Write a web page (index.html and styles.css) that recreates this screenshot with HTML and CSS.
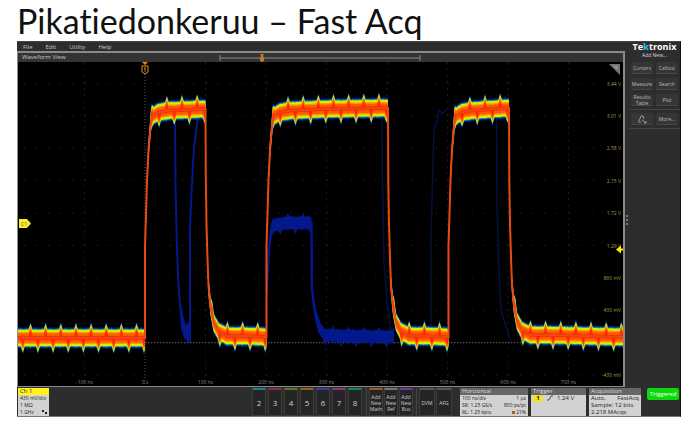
FILE: index.html
```html
<!DOCTYPE html>
<html lang="fi">
<head>
	<meta charset="utf-8">
	<title>Pikatiedonkeruu – Fast Acq</title>
	<meta name="viewport" content="width=device-width, initial-scale=1.0">
	<link rel="stylesheet" href="styles.css">
</head>
<body>
	<h1>Pikatiedonkeruu – Fast Acq</h1>
	<div class="scope">
		<div class="top">
			<div class="main">
				<nav class="menu">
					<button>File</button>
					<button>Edit</button>
					<button>Utility</button>
					<button>Help</button>
				</nav>
				<div class="view">
					<div class="view-head">
						<span>Waveform View</span>
						<svg class="overview" viewBox="0 0 202 8">
							<path d="M1 1V7M201 1V7M1 4H201" stroke="#8a8a8a" fill="none"/>
							<path d="M41 0h4l-1 2 1 2v3l-2 1-2-1V4l1-2z" fill="#c87828"/>
						</svg>
					</div>
					<svg class="plot" id="plot" viewBox="0 0 605 324"></svg>
				</div>
			</div>
			<aside class="side">
				<div class="logo">Te<b>k</b>tronix</div>
				<div class="add">Add New...</div>
				<div class="tools">
					<button>Cursors</button>
					<button>Callout</button>
					<button>Measure</button>
					<button>Search</button>
					<button>Results<br>Table</button>
					<button>Plot</button>
				</div>
				<div class="tools">
					<button aria-label="Zoom">
						<svg viewBox="0 0 12 10" width="12" height="10">
							<path d="M2 8h3M3 7l2-5h2l1 3M6 6l4 3M8 9h2V7" stroke="#999" fill="none"/>
						</svg>
					</button>
					<button>More...</button>
				</div>
				<div class="grip"><i></i><i></i><i></i></div>
			</aside>
		</div>
		<div class="bar">
			<div class="badge ch1">
				<h2>Ch 1</h2>
				<p>430 mV/div</p>
				<p>1 MΩ</p>
				<p><span>1 GHz</span><svg viewBox="0 0 5 5" width="5" height="5"><path d="M0 1h2v2h3v2H3V3H0z" fill="#222"/></svg></p>
			</div>
			<div class="channels">
				<button class="c2">2</button>
				<button class="c3">3</button>
				<button class="c4">4</button>
				<button class="c5">5</button>
				<button class="c6">6</button>
				<button class="c7">7</button>
				<button class="c8">8</button>
			</div>
			<div class="channels small">
				<button class="c5">Add<br>New<br>Math</button>
				<button class="cr">Add<br>New<br>Ref</button>
				<button class="cb">Add<br>New<br>Bus</button>
			</div>
			<div class="channels small wide">
				<button>DVM</button>
				<button>AFG</button>
			</div>
			<div class="badge horizontal">
				<h2>Horizontal</h2>
				<p><span>100 ns/div</span><span>1 µs</span></p>
				<p><span>SR: 1.25 GS/s</span><span>800 ps/pt</span></p>
				<p><span>RL: 1.25 kpts</span><span><i class="pos"></i> 21%</span></p>
			</div>
			<div class="badge trigger">
				<h2>Trigger</h2>
				<p><b>1</b><svg viewBox="0 0 6 6" width="6" height="6"><path d="M0 5h2l2-4h2" stroke="#456" fill="none"/></svg><span>1.24 V</span></p>
			</div>
			<div class="badge acquisition">
				<h2>Acquisition</h2>
				<p><span>Auto,</span><span>FastAcq</span></p>
				<p>Sample: 12 bits</p>
				<p>2.218 MAcqs</p>
			</div>
			<button class="triggered">Triggered</button>
		</div>
	</div>
	<script src="plot.js"></script>
</body>
</html>
```

FILE: styles.css
```css
body {
	margin: 0;
	padding: 0 19px 0 17px;
	background: #fff;
	font-family: "Open Sans", "Liberation Sans", sans-serif;
}

h1 {
	margin: 0;
	height: 41px;
	font: 34px/41px Lato, sans-serif;
	font-variant-ligatures: none;
	color: #111;
	white-space: nowrap;
}

button {
	margin: 0;
	padding: 0;
	border: none;
	background: none;
	color: #bbb;
	font: 6px/6px "Open Sans", sans-serif;
	white-space: nowrap;
}

.scope {
	background: #2d2d2d;
	border-top: 1px solid #444;
	border-bottom: 1px solid #777;
	border-right: 1px solid #111;
	box-sizing: border-box;
}

.top {
	display: grid;
	grid-template-columns: 1fr 55px;
}

.menu {
	display: flex;
	gap: 13px;
	height: 9px;
	padding-left: 6px;
}

.menu button {
	color: #ccc;
}

.view {
	border: 1px solid #8a8a8a;
	border-top-width: 2px;
	border-right-width: 2px;
}

.view-head {
	display: flex;
	align-items: center;
	height: 9px;
	background: #333;
	color: #ccc;
	font-size: 6px;
	line-height: 9px;
}

.view-head span {
	width: 197px;
	padding-left: 4px;
}

.overview {
	width: 202px;
	height: 8px;
}

.plot {
	display: block;
	width: 100%;
	background: #000;
	font: 5px "Open Sans", sans-serif;
}

.side {
	display: flex;
	flex-direction: column;
	padding-left: 4px;
}

.logo {
	color: #fff;
	font: bold 9px/9px "Open Sans", sans-serif;
	text-align: center;
}

.logo b {
	color: #2bb6d6;
}

.add {
	padding-top: 1px;
	color: #ddd;
	font-size: 5px;
	line-height: 7px;
	text-align: center;
}

.tools {
	display: grid;
	grid-template-columns: 1fr 1fr;
	gap: 4px 3px;
	padding: 3px 2px;
	border-bottom: 1px solid #444;
}

.tools button {
	display: grid;
	place-items: center;
	height: 12px;
	background: #363636;
	border-bottom: 1px solid #484848;
	border-radius: 2px;
	font-size: 5px;
	line-height: 6px;
	text-align: center;
}

.grip {
	display: flex;
	flex-direction: column;
	gap: 2px;
	margin: 86px 0 0 -3px;
}

.grip i {
	width: 2px;
	height: 2px;
	background: #777;
}

.bar {
	display: flex;
	gap: 3px;
	height: 28px;
	padding: 1px 1px 0 1px;
}

.badge {
	background: #d2d2d2;
	color: #222;
	font-size: 6px;
	line-height: 7px;
	overflow: hidden;
	white-space: nowrap;
}

.badge h2 {
	margin: 0;
	padding-left: 2px;
	background: #666;
	color: #ddd;
	font: 6px/7px "Open Sans", sans-serif;
}

.badge p {
	display: flex;
	justify-content: space-between;
	margin: 0;
	padding: 0 2px;
}

.ch1 {
	width: 31px;
	margin-right: auto;
}

.ch1 h2 {
	background: #fff01e;
	color: #332;
}

.ch1 p {
	font-size: 5px;
}

.channels {
	display: flex;
	gap: 2px;
	padding-right: 1px;
}

.channels button {
	width: 14px;
	background: #252525;
	border: 1px solid #3b3b3b;
	border-top: 2px solid #555;
	color: #ccc;
	font-size: 8px;
}

.channels.small {
	gap: 1px;
	padding: 0 0 0 2px;
	border-left: 1px solid #444;
}

.channels.small button {
	font-size: 5px;
	line-height: 6px;
}

.channels.wide {
	padding-right: 5px;
}

.channels.wide button {
	width: 16px;
}

.channels .c2 { border-top-color: #1a7f86; }
.channels .c3 { border-top-color: #8a2d48; }
.channels .c4 { border-top-color: #5c7622; }
.channels .c5 { border-top-color: #9a5f20; }
.channels .c6 { border-top-color: #3c3c96; }
.channels .c7 { border-top-color: #88387a; }
.channels .c8 { border-top-color: #138a5a; }
.channels .cr { border-top-color: #777; }
.channels .cb { border-top-color: #743a98; }

.horizontal {
	width: 68px;
}

.horizontal p {
	font-size: 5px;
}

.trigger {
	width: 55px;
}

.acquisition {
	width: 52px;
}

.trigger p {
	justify-content: flex-start;
	gap: 4px;
}

.trigger b {
	width: 10px;
	border-radius: 2px;
	background: #f2e31c;
	line-height: 6px;
	text-align: center;
}

.pos {
	display: inline-block;
	width: 3px;
	height: 3px;
	background: #b05a10;
}

.triggered {
	width: 32px;
	height: 12px;
	margin-left: 3px;
	border-radius: 2px;
	background: #0bd90b;
	color: #fff;
}
```

FILE: plot.js
```js
const plot = document.getElementById('plot');
const LOW = 275;
const HIGH = 47;

// edge shapes: [dx, fraction of the swing already done]
const rise = [[0, 0], [0, .4], [1, .54], [2, .69], [3.5, .82], [5, .9], [6, .945], [8, .97], [13, .985], [24, .993], [60, 1]];
const fall = [[0, 0], [0.3, .31], [1, .51], [2, .66], [3, .78], [5, .87], [8, .94], [13, .98], [21, 1], [40, 1]];

function edge(x, from, to, shape) {
	return shape.map(p => [x + p[0], from + (to - from) * p[1]]);
}

// keeps the vertical jumps and samples the rest finely enough for the spikes
function sample(points) {
	const out = [];
	for (let i = 0; i < points.length - 1; i++) {
		const [x0, y0] = points[i], [x1, y1] = points[i + 1];
		const n = Math.max(1, Math.ceil((x1 - x0) * 2));
		for (let k = 0; k < n; k++) {
			out.push([x0 + (x1 - x0) * k / n, y0 + (y1 - y0) * k / n]);
		}
	}
	out.push(points[points.length - 1]);
	return out;
}

function spike(x, phase, size) {
	const d = Math.abs((((x - phase) % 15.15) + 22.725) % 15.15 - 7.575);
	return Math.max(0, 1 - d / 1.8) * size;
}

function noise(x) {
	return Math.sin(x * 1.9) * .5 + Math.sin(x * 0.83) * .5;
}

function d(points) {
	return 'M' + points.map(p => p[0].toFixed(1) + ' ' + p[1].toFixed(1)).join('L');
}

function band(points, half, color, size, rough) {
	const top = points.map(([x, y]) => [x, y - half - spike(x, 12.5, size) - noise(x) * rough]);
	const bottom = points.map(([x, y]) => [x, y + half + spike(x, 4.8, size) + noise(x + 5) * rough]).reverse();
	return `<path d="${d(top.concat(bottom))}Z" fill="${color}"/>`;
}

function line(points, color, width) {
	return `<path d="${d(points)}" stroke="${color}" stroke-width="${width}" fill="none"/>`;
}

function grid() {
	let s = '';
	for (let i = 0; i < 9; i++) {
		const x = 66.5 + i * 60.5;
		s += `<path d="M${x} 0V324" stroke="${i === 1 ? '#555' : '#222'}" stroke-dasharray="${i === 1 ? '1 2' : '1.5 5'}"/>`;
		const label = i === 1 ? '0 s' : (i - 1) * 100 + ' ns';
		s += `<text x="${x}" y="322" text-anchor="middle" fill="#888">${label}</text>`;
	}
	const volts = ['3.44 V', '3.01 V', '2.58 V', '2.15 V', '1.72 V', '1.29 V', '860 mV', '430 mV', '', '-430 mV'];
	volts.forEach((v, i) => {
		const y = 21.5 + i * 32.4;
		s += i === 8
			? `<path d="M127 ${y}H605" stroke="#666" stroke-dasharray="1.5 1.5"/>`
			: `<path d="M6 ${y}H580" stroke="#222" stroke-dasharray="1.5 10.6"/>`;
		s += `<text x="603" y="${y + 2}" text-anchor="end" fill="#a89f38">${v}</text>`;
	});
	return s;
}

const main = sample([
	[0, 276],
	...edge(127, 276, HIGH, rise).slice(0, -1),
	...edge(187.5, HIGH, LOW - 1, fall),
	...edge(248.5, LOW, HIGH, rise),
	...edge(370, 46, LOW - 1, fall),
	...edge(430.5, LOW, HIGH, rise).slice(0, -1),
	...edge(491, 46, LOW - 2, fall),
	[605, 275]
]);

const blue = '#04188c';
const faint = '#02103f';
const early = [[157, 55], [157.5, 120], [158.5, 170], [160, 215], [162, 243], [166, 263], [172, 275]];
const runt = sample([[248.5, 230], [251, 188], [253, 168], [257, 163], [270, 161], [293.5, 161], [293.8, 223], [296, 245], [300, 263], [306, 273], [318, 274], [376, 275]]);

let svg = grid();
svg += line([[364, 55], [364.5, 120], [366, 200], [369, 240], [373, 270]], faint, 1.5);
svg += line([[413, 275], [413, 178], [414.5, 118], [416, 68], [419, 60], [421, 48], [424, 52], [430, 46]], faint, 1.5);
svg += line([[478.5, 55], [479, 138], [480.5, 200], [483, 248], [489, 268], [493, 280]], faint, 1.5);
svg += line(early, blue, 2);
svg += `<path d="M161 240L164 253 168 263 172 258V282L166 276 163 266z" fill="${blue}"/>`;
svg += line([[172, 280], [172, 168], [173.5, 130], [176, 85], [180, 55]], blue, 2);
svg += band(runt, 6.5, blue, 4, .8);
svg += line(runt, blue, 2.5);

svg += band(main, 10.5, '#001c9a', 6, .4);
svg += band(main, 9.2, '#0a9a88', 6, .2);
svg += band(main, 8.2, '#d8ee00', 6, .2);
svg += band(main, 6, '#ff9800', 6, .2);
svg += band(main, 4.6, '#ff5a00', 6, .2);
svg += band(main, 1.8, '#ff2600', 6, .2);
svg += line(main, '#e84a10', 2);

// trigger point, channel handle, trigger level and corner
svg += '<path d="M124 0h6l-3 3z" fill="#f08a20"/><path d="M124 4h6v6l-3 2-3-2zM127 5v4" fill="none" stroke="#f08a20"/>';
svg += '<path d="M1 157h8l4 4.500-4 4.500h-8z" fill="#f8ee30"/><text x="3" y="163.500" fill="#554">C1</text>';
svg += '<path d="M598 187.500l5-4v3h2v2h-2v3z" fill="#fff200"/>';
svg += '<path d="M591 2h11v11z" fill="#777"/><path d="M596 4l3 3M599 4v3" stroke="#aaa" fill="none"/>';
plot.innerHTML = svg;
```
